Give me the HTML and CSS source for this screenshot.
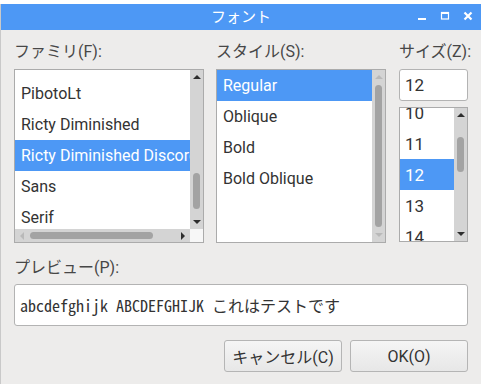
FILE: index.html
```html
<!DOCTYPE html>
<html lang="ja">
<head>
  <meta charset="UTF-8" />
  <title>フォント</title>
  <link rel="stylesheet" href="styles.css">
</head>
<body>

<div class="window">
  <div class="titlebar">
    <span></span>
    <span class="title">フォント</span>
    <span class="controls">
      <svg width="10" height="10" viewBox="0 0 10 10"><rect x="1" y="7" width="8" height="2" fill="#fff"/></svg>
      <svg width="10" height="10" viewBox="0 0 10 10"><rect x="1.5" y="1.5" width="7" height="6.5" fill="none" stroke="#fff" stroke-width="1.2"/><rect x="1" y="1" width="8" height="2" fill="#fff"/></svg>
      <svg width="10" height="10" viewBox="0 0 10 10"><path d="M1.5 1.5 L8.5 8.5 M8.5 1.5 L1.5 8.5" stroke="#fff" stroke-width="2.2"/></svg>
    </span>
  </div>

  <div class="content">
    <div class="columns">
      <div class="col family">
        <div class="label">ファミリ(F):</div>
        <div class="list with-h">
          <div class="items family-items">
            <div class="item">PibotoLt</div>
            <div class="item">Ricty Diminished</div>
            <div class="item selected">Ricty Diminished Discord</div>
            <div class="item">Sans</div>
            <div class="item">Serif</div>
          </div>
          <div class="vscroll">
            <div class="arrow up"></div>
            <div class="track"><div class="thumb" style="margin-top: 89px; height: 36px"></div></div>
            <div class="arrow down"></div>
          </div>
          <div class="hscroll">
            <div class="arrow left off"></div>
            <div class="track"><div class="thumb" style="margin-left: 1px; width: 123px"></div></div>
            <div class="arrow right"></div>
          </div>
          <div class="corner"></div>
        </div>
      </div>

      <div class="col style">
        <div class="label">スタイル(S):</div>
        <div class="list">
          <div class="items">
            <div class="item selected">Regular</div>
            <div class="item">Oblique</div>
            <div class="item">Bold</div>
            <div class="item">Bold Oblique</div>
          </div>
          <div class="vscroll">
            <div class="arrow up off"></div>
            <div class="track"><div class="thumb" style="margin-top: 1px; height: 142px"></div></div>
            <div class="arrow down off"></div>
          </div>
        </div>
      </div>

      <div class="col size">
        <div class="label">サイズ(Z):</div>
        <div class="entry">12</div>
        <div class="list size-list">
          <div class="items size-items">
            <div class="item">10</div>
            <div class="item">11</div>
            <div class="item selected">12</div>
            <div class="item">13</div>
            <div class="item">14</div>
          </div>
          <div class="vscroll">
            <div class="arrow up"></div>
            <div class="track"><div class="thumb" style="margin-top: 15px; height: 35px"></div></div>
            <div class="arrow down"></div>
          </div>
        </div>
      </div>
    </div>

    <div class="label preview-label">プレビュー(P):</div>
    <div class="preview">abcdefghijk ABCDEFGHIJK これはテストです</div>

    <div class="buttons">
      <button>キャンセル(C)</button>
      <button>OK(O)</button>
    </div>
  </div>
</div>

</body>
</html>
```

FILE: styles.css
```css
body {
  margin: 0;
  background: #fff;
  font-family: Roboto, "Noto Sans CJK JP", sans-serif;
  color: #333;
}

.window {
  margin-top: 4px;
  height: 380px;
  background: #edeceb;
  border-left: 1px solid #c9c9c9;
}

.titlebar {
  height: 26px;
  background: #4d98f5;
  display: grid;
  grid-template-columns: 1fr auto 1fr;
  align-items: center;
}

.title {
  color: #fff;
  font-family: "Noto Sans CJK JP", sans-serif;
  font-size: 15px;
  line-height: 24px;
  padding-bottom: 2px;
}

.controls {
  display: flex;
  justify-content: flex-end;
  gap: 13px;
  padding-right: 8px;
  padding-bottom: 2px;
}

.controls svg {
  display: block;
}

.content {
  padding: 12px 13px 0 13px;
}

.columns {
  display: flex;
}

.col.family { width: 190px; }
.col.style { width: 170px; margin-left: 12px; }
.col.size { width: 69px; margin-left: 13px; }

.label {
  font-size: 16px;
  line-height: 20px;
  color: #474747;
  margin-bottom: 7px;
  white-space: nowrap;
}

.list {
  height: 172px;
  background: #fff;
  border: 1px solid #ababab;
  display: grid;
  grid-template-columns: 1fr 13px;
  grid-template-rows: 1fr;
  overflow: hidden;
}

.list.with-h {
  grid-template-rows: 1fr 13px;
}

.items {
  overflow: hidden;
  font-size: 16px;
  min-width: 0;
}

.family-items {
  padding-top: 8px;
}

.item {
  height: 31px;
  line-height: 32px;
  padding-left: 6px;
  white-space: nowrap;
  color: #333;
}

.item.selected {
  background: #4d98f5;
  color: #fff;
}

.vscroll,
.hscroll {
  background: #d4d4d4;
  display: flex;
}

.vscroll {
  flex-direction: column;
}

.vscroll .track {
  flex: 1;
  display: flex;
  flex-direction: column;
  align-items: center;
}

.hscroll .track {
  flex: 1;
  display: flex;
  align-items: center;
}

.vscroll .thumb {
  width: 7px;
  background: #a3a3a3;
  border-radius: 4px;
}

.hscroll .thumb {
  height: 7px;
  background: #a3a3a3;
  border-radius: 4px;
}

.arrow {
  width: 13px;
  height: 14px;
  display: flex;
  align-items: center;
  justify-content: center;
  flex: none;
}

.hscroll .arrow {
  width: 14px;
  height: 13px;
}

.arrow::before {
  content: "";
  display: block;
  width: 0;
  height: 0;
}

.arrow.up::before {
  border-left: 4px solid transparent;
  border-right: 4px solid transparent;
  border-bottom: 4px solid #2e2e2e;
}

.arrow.down::before {
  border-left: 4px solid transparent;
  border-right: 4px solid transparent;
  border-top: 4px solid #2e2e2e;
}

.arrow.left::before {
  border-top: 4px solid transparent;
  border-bottom: 4px solid transparent;
  border-right: 4px solid #2e2e2e;
}

.arrow.right::before {
  border-top: 4px solid transparent;
  border-bottom: 4px solid transparent;
  border-left: 4px solid #2e2e2e;
}

.arrow.up.off::before { border-bottom-color: #b9b9b9; }
.arrow.down.off::before { border-top-color: #b9b9b9; }
.arrow.left.off::before { border-right-color: #b9b9b9; }

.corner {
  background: #f7f7f7;
}

.entry {
  margin-top: 1px;
  height: 30px;
  line-height: 30px;
  background: #fff;
  border: 1px solid #b3b3b3;
  border-radius: 3px;
  padding-left: 5px;
  font-size: 17px;
}

.size-list {
  margin-top: 6px;
  height: 133px;
}

.size-items .item:first-child {
  margin-top: -11px;
}

.size-items .item {
  padding-left: 5px;
  font-size: 17px;
}

.preview-label {
  margin-top: 15px;
  margin-bottom: 6px;
}

.preview {
  height: 40px;
  line-height: 40px;
  background: #fff;
  border: 1px solid #b3b3b3;
  border-radius: 3px;
  padding-left: 5px;
  font-family: "Noto Sans Mono CJK JP", "DejaVu Sans Mono", monospace;
  font-size: 16px;
  color: #333;
  white-space: nowrap;
}

.buttons {
  display: flex;
  justify-content: flex-end;
  gap: 8px;
  margin-top: 14px;
}

button {
  width: 118px;
  height: 32px;
  font-family: Roboto, "Noto Sans CJK JP", sans-serif;
  font-size: 16px;
  color: #333;
  background: linear-gradient(#f5f5f5, #e7e7e7);
  border: 1px solid #b5b5b5;
  border-radius: 3px;
  padding: 0;
}
```
